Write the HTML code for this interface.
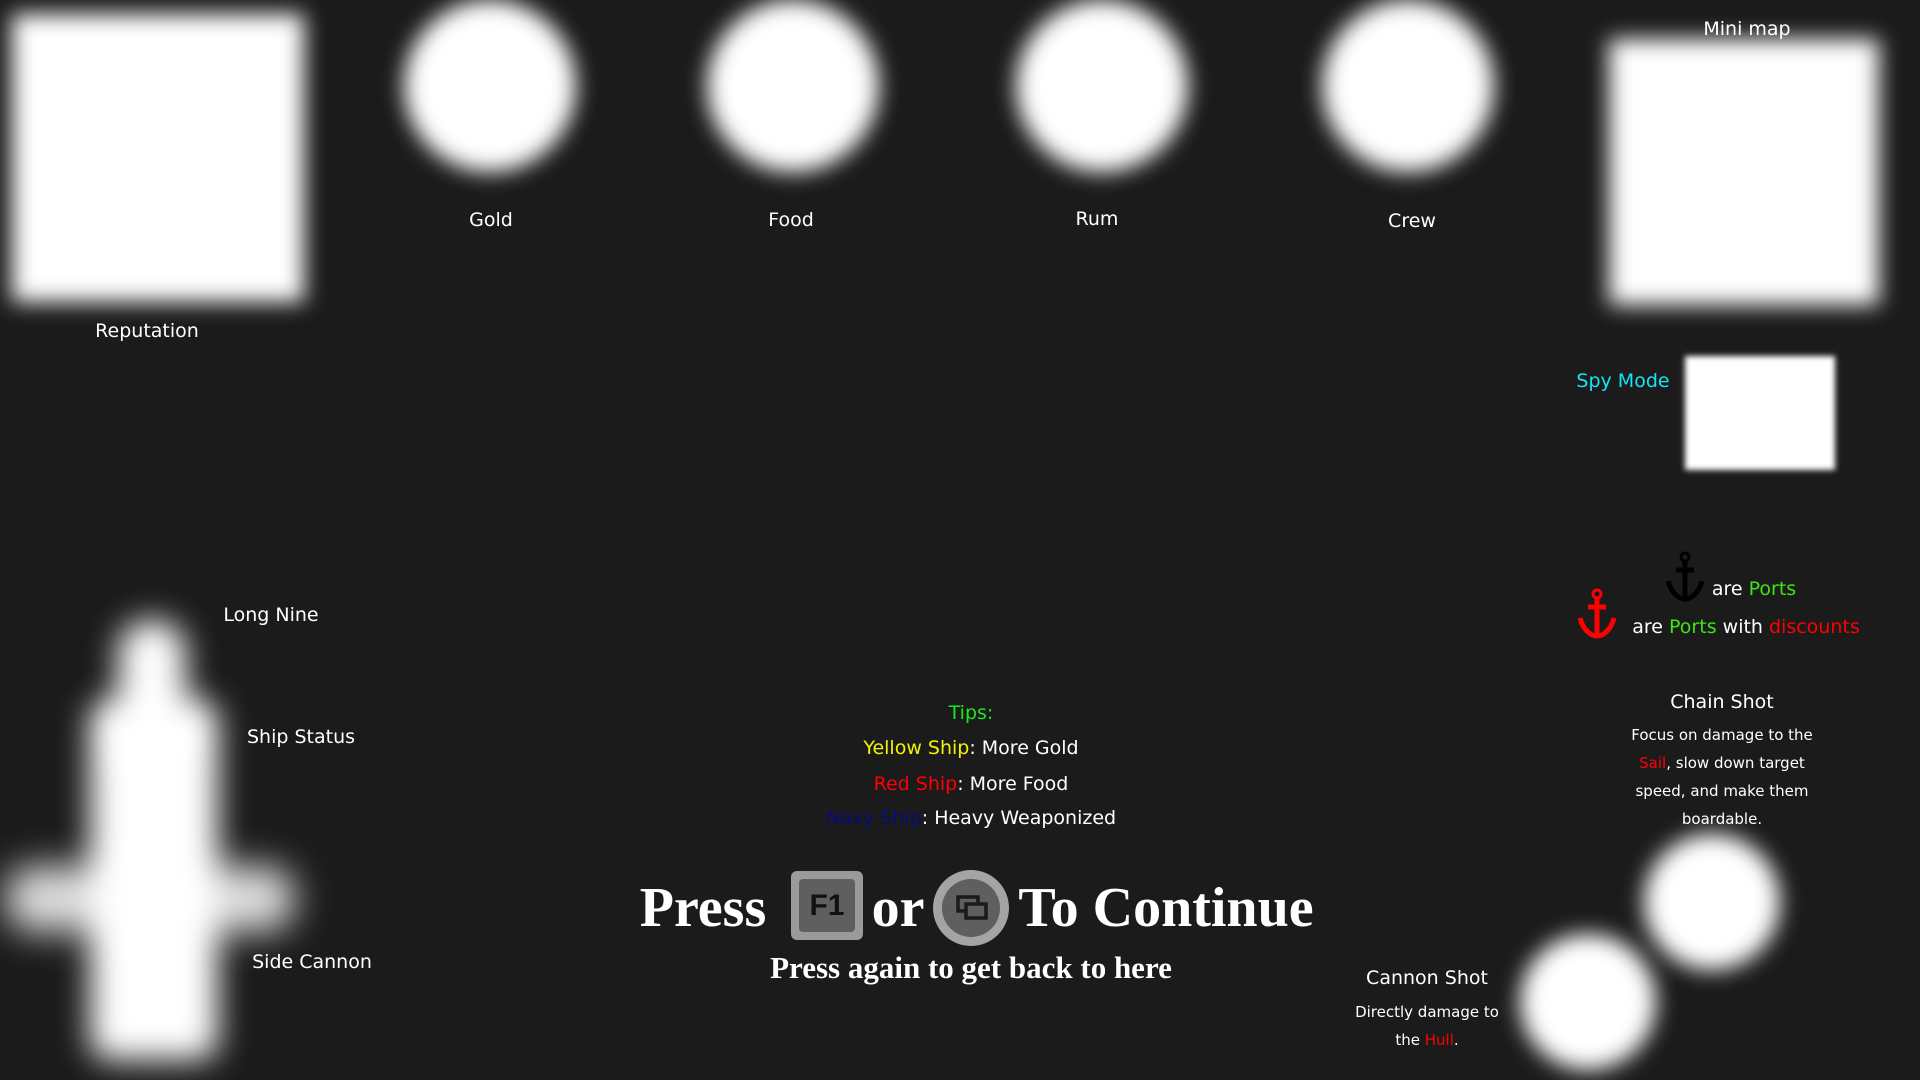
<!DOCTYPE html>
<html><head><meta charset="utf-8"><style>
html,body{margin:0;padding:0;}
body{width:1920px;height:1080px;background:#1b1b1b;position:relative;overflow:hidden;font-family:"DejaVu Sans","Liberation Sans",sans-serif;color:#fff;}
.b{position:absolute;background:#fff;filter:blur(11px);}
.c{border-radius:50%;}
.t{position:absolute;transform:translate(-50%,-50%);white-space:nowrap;font-size:19px;}
.s{font-size:15px;line-height:28px;text-align:center;}
.g{color:#3ee60f}.r{color:#f00}
.goth{font-family:"Liberation Serif",serif;font-weight:bold;}
</style></head><body>
<div class="b" style="left:12px;top:14px;width:292px;height:288px;"></div>
<div class="b c" style="left:404px;top:0px;width:172px;height:172px;"></div>
<div class="b c" style="left:707px;top:0px;width:172px;height:172px;"></div>
<div class="b c" style="left:1016px;top:0px;width:172px;height:172px;"></div>
<div class="b c" style="left:1322px;top:0px;width:172px;height:172px;"></div>
<div class="b" style="left:1609px;top:39px;width:270px;height:266px;"></div>
<div class="b" style="left:1685px;top:356px;width:150px;height:114px;filter:blur(3px);"></div>
<div class="b c" style="left:1644px;top:834px;width:136px;height:136px;"></div>
<div class="b c" style="left:1520px;top:934px;width:136px;height:136px;"></div>
<!-- ship -->
<div class="b" style="left:118px;top:620px;width:68px;height:140px;border-radius:32px 32px 0 0;filter:blur(16px);"></div>
<div class="b" style="left:90px;top:700px;width:128px;height:360px;border-radius:20px;filter:blur(16px);"></div>
<div class="b" style="left:5px;top:866px;width:290px;height:66px;border-radius:30px;filter:blur(18px);opacity:.85"></div>

<div class="t" style="left:147px;top:331px">Reputation</div>
<div class="t" style="left:491px;top:220px">Gold</div>
<div class="t" style="left:791px;top:220px">Food</div>
<div class="t" style="left:1097px;top:219px">Rum</div>
<div class="t" style="left:1412px;top:221px">Crew</div>
<div class="t" style="left:1747px;top:29px">Mini map</div>
<div class="t" style="left:1623px;top:381px;color:#13e5f5">Spy Mode</div>

<svg style="position:absolute;left:1665px;top:551px" width="40" height="52" viewBox="0 0 40 52"><g fill="none" stroke="#000" stroke-width="5"><circle cx="20" cy="6" r="4" stroke-width="3"/><path d="M20 10V48M11 19H29M3 30C6 42 14 48 20 48C26 48 34 42 37 30"/></g></svg>
<svg style="position:absolute;left:1577px;top:588px" width="40" height="52" viewBox="0 0 40 52"><g fill="none" stroke="#f00" stroke-width="5"><circle cx="20" cy="6" r="4" stroke-width="3"/><path d="M20 10V48M11 19H29M3 30C6 42 14 48 20 48C26 48 34 42 37 30"/></g></svg>
<div class="t" style="left:1754px;top:589px">are <span class="g">Ports</span></div>
<div class="t" style="left:1746px;top:627px">are <span class="g">Ports</span> with <span class="r">discounts</span></div>

<div class="t" style="left:1722px;top:702px">Chain Shot</div>
<div class="t s" style="left:1722px;top:777px">Focus on damage to the<br><span class="r">Sail</span>, slow down target<br>speed, and make them<br>boardable.</div>
<div class="t" style="left:1427px;top:978px">Cannon Shot</div>
<div class="t s" style="left:1427px;top:1026px">Directly damage to<br>the <span class="r">Hull</span>.</div>

<div class="t" style="left:271px;top:615px">Long Nine</div>
<div class="t" style="left:301px;top:737px">Ship Status</div>
<div class="t" style="left:312px;top:962px">Side Cannon</div>

<div class="t" style="left:971px;top:713px;color:#1ee61e">Tips:</div>
<div class="t" style="left:971px;top:748px"><span style="color:#f2f20a">Yellow Ship</span>: More Gold</div>
<div class="t" style="left:971px;top:784px"><span class="r">Red Ship</span>: More Food</div>
<div class="t" style="left:971px;top:818px"><span style="color:#0a0a80">Navy Ship</span>: Heavy Weaponized</div>

<div class="t goth" style="left:703px;top:908px;font-size:56px">Press</div>
<div style="position:absolute;left:791px;top:871px;width:72px;height:69px;background:#9a9a9a;border-radius:6px;"><div style="position:absolute;left:8px;top:8px;width:56px;height:53px;background:#5f5f5f;border-radius:4px;color:#111;font:bold 30px 'Liberation Sans',sans-serif;text-align:center;line-height:53px">F1</div></div>
<div class="t goth" style="left:898px;top:908px;font-size:56px">or</div>
<div style="position:absolute;left:933px;top:870px;width:76px;height:76px;border-radius:50%;background:#a4a4a4;"><div style="position:absolute;left:9px;top:9px;width:58px;height:58px;border-radius:50%;background:#5f5f5f;"></div>
<svg style="position:absolute;left:22px;top:24px" width="34" height="28" viewBox="0 0 34 28"><g fill="none" stroke="#1a1a1a" stroke-width="3.5"><rect x="3" y="3" width="20" height="14"/><rect x="11" y="10" width="20" height="14" fill="#5f5f5f"/></g></svg></div>
<div class="t goth" style="left:1166px;top:908px;font-size:56px">To Continue</div>
<div class="t goth" style="left:971px;top:968px;font-size:31px">Press again to get back to here</div>
</body></html>
